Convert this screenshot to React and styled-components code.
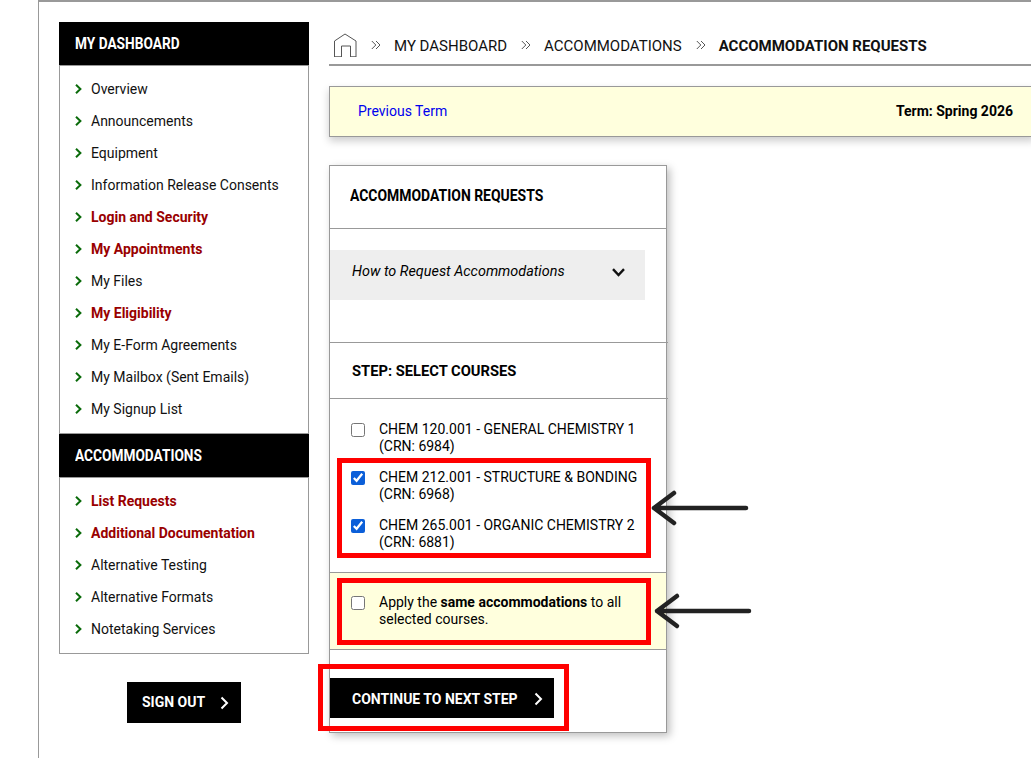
import React from "react";
import styled, { createGlobalStyle } from "styled-components";

const Global = createGlobalStyle`
  html, body { margin: 0; padding: 0; height: 758px; overflow: hidden; background: #fff; }
  body { font-family: Roboto, "Liberation Sans", sans-serif; font-size: 14px; color: #000; }
`;
const Page = styled.div`
  position: relative; display: flex; gap: 20px; height: 758px; box-sizing: border-box;
  margin-left: 38px; padding: 20px 0 0 20px;
  border-top: 2px solid #999; border-left: 1px solid #999; overflow: hidden;
`;
const Sidebar = styled.aside`flex: 0 0 250px; display: flex; flex-direction: column;`;
const Condensed = styled.span`
  display: inline-block; transform: scaleX(${p => p.$x || 0.805}); transform-origin: left center; white-space: nowrap;
`;
const SideHeader = styled.h2`
  margin: 0; height: 43px; box-sizing: border-box; background: #000; color: #fff; padding: 0 0 2px 16px;
  display: flex; align-items: center; font-size: 17px; font-weight: 700;
`;
const SideList = styled.ul`
  margin: 0; padding: 7px 0 8px 15px; list-style: none; border: 1px solid #999;
`;
const SideItem = styled.li`
  height: 32px; display: flex; align-items: center; gap: 9px;
  color: ${p => p.$alert ? "#990000" : "#111"}; font-weight: ${p => p.$alert ? 700 : 400};
`;
const Chevron = styled.svg`flex: none; width: 7px; height: 10px; fill: none; stroke: #0b6b0b; stroke-width: 2;`;
const SignOut = styled.button`
  align-self: center; margin-top: 28px; width: 114px; height: 41px; border: 0; background: #000; color: #fff;
  font: 700 14px Roboto, sans-serif; display: flex; align-items: center; padding: 0 0 0 15px; gap: 15px;
`;
const SignOutLabel = styled.span`margin-top: -2px;`;
const BtnChevron = styled.svg`flex: none; width: 9px; height: 14px; fill: none; stroke: #fff; stroke-width: 2;`;
const Main = styled.main`flex: 1; min-width: 0; display: flex; flex-direction: column; align-items: flex-start;`;
const Crumbs = styled.nav`
  align-self: stretch; height: 36px; padding: 6px 0 0 4px; border-bottom: 2px solid #999; box-sizing: content-box;
  display: flex; align-items: center; margin-bottom: 20px; font-size: 15px; color: #111;
`;
const HomeIcon = styled.svg`width: 24px; height: 24px; fill: none; stroke: #555; stroke-width: 1; margin-top: -2px;`;
const Sep = styled.svg`width: 10px; height: 10px; fill: none; stroke: #555; stroke-width: 1; margin: -2px 13px 0 14px;`;
const CrumbCurrent = styled.strong`font-weight: 700;`;
const TermBar = styled.div`
  align-self: stretch; margin-right: -4px; height: 51px; box-sizing: border-box; background: #ffd; border: 1px solid #999;
  box-shadow: 0 4px 8px rgba(0,0,0,.2); display: flex; align-items: center; justify-content: space-between;
  padding: 0 21px 2px 28px;
`;
const TermLink = styled.a`color: #0000ee;`;
const TermLabel = styled.strong`font-weight: 700;`;
const Card = styled.section`
  margin-top: 28px; width: 338px; height: 568px; box-sizing: border-box; border: 1px solid #999;
  box-shadow: 3px 3px 8px rgba(0,0,0,.25); display: flex; flex-direction: column;
`;
const CardTitle = styled.h1`
  margin: 0; flex: none; height: 63px; box-sizing: border-box; border-bottom: 1px solid #999; padding: 0 0 5px 20px;
  display: flex; align-items: center; font-size: 17px; font-weight: 700;
`;
const AccordionZone = styled.div`flex: none; height: 114px; box-sizing: border-box; padding-top: 21px; border-bottom: 1px solid #999; margin-right: -2px;`;
const Accordion = styled.div`
  width: 315px; height: 50px; background: #eee; display: flex; align-items: center; justify-content: space-between;
  box-sizing: border-box; padding: 0 20px 0 22px;
`;
const AccordionLabel = styled.span`font-style: italic; font-size: 14.4px; margin-top: -8px;`;
const Down = styled.svg`width: 13px; height: 9px; fill: none; stroke: #111; stroke-width: 2.4; margin-top: -6px;`;
const StepTitle = styled.h2`
  margin: 0; flex: none; height: 56px; box-sizing: border-box; border-bottom: 1px solid #999; margin-right: -2px; padding-left: 22px;
  display: flex; align-items: center; font-size: 15px; font-weight: 700;
`;
const Courses = styled.div`flex: none; height: 173px; box-sizing: border-box; padding-top: 22px; display: flex; flex-direction: column; gap: 14px;`;
const CheckRow = styled.label`display: flex; gap: 14px; padding-left: 21px; line-height: 17px;`;
const Box = styled.input`width: 14px; height: 14px; margin: 2px 0 0; flex: none; accent-color: #0b5fd9;`;
const Same = styled.div`
  flex: none; height: 78px; box-sizing: border-box; background: #ffd; border-top: 1px solid #999; border-bottom: 1px solid #999; padding-top: 21px;
`;
const Continue = styled.button`
  margin: 28px 0 0; width: 224px; height: 40px; border: 0; background: #000; color: #fff; flex: none;
  font: 700 14px Roboto, sans-serif; display: flex; align-items: center; padding: 1px 0 0 22px; gap: 16px;
`;
const Highlight = styled.div`
  position: absolute; left: ${p => p.$x}px; top: ${p => p.$y}px; width: ${p => p.$w}px; height: ${p => p.$h}px;
  box-sizing: border-box; border: 5px solid #f00; pointer-events: none;
`;
const Arrow = styled.svg`
  position: absolute; left: ${p => p.$x}px; top: ${p => p.$y}px; width: 100px; height: 40px;
  fill: none; stroke: #222; stroke-width: 4.5; stroke-linecap: round; stroke-linejoin: round;
`;

const Item = ({ alert, children }) => (
  <SideItem $alert={alert}>
    <Chevron viewBox="0 0 7 10"><path d="M1 .8 5.4 5 1 9.2" /></Chevron>
    <span>{children}</span>
  </SideItem>
);
const SepIcon = () => (
  <Sep viewBox="0 0 10 10"><path d="M.8 1l4 4-4 4M5 1l4 4-4 4" /></Sep>
);
const RightChevron = () => (
  <BtnChevron viewBox="0 0 9 14"><path d="M1.5 1.5 7 7l-5.5 5.5" /></BtnChevron>
);
const ArrowIcon = ({ x, y }) => (
  <Arrow $x={x} $y={y} viewBox="0 0 100 40"><path d="M96 20H4M24 5 4 20l20 15" /></Arrow>
);

export default function App() {
  return (
    <Page>
      <Global />
      <Sidebar>
        <SideHeader><Condensed>MY DASHBOARD</Condensed></SideHeader>
        <SideList>
          <Item>Overview</Item>
          <Item>Announcements</Item>
          <Item>Equipment</Item>
          <Item>Information Release Consents</Item>
          <Item alert>Login and Security</Item>
          <Item alert>My Appointments</Item>
          <Item>My Files</Item>
          <Item alert>My Eligibility</Item>
          <Item>My E-Form Agreements</Item>
          <Item>My Mailbox (Sent Emails)</Item>
          <Item>My Signup List</Item>
        </SideList>
        <SideHeader><Condensed>ACCOMMODATIONS</Condensed></SideHeader>
        <SideList>
          <Item alert>List Requests</Item>
          <Item alert>Additional Documentation</Item>
          <Item>Alternative Testing</Item>
          <Item>Alternative Formats</Item>
          <Item>Notetaking Services</Item>
        </SideList>
        <SignOut><SignOutLabel>SIGN OUT</SignOutLabel> <RightChevron /></SignOut>
      </Sidebar>
      <Main>
        <Crumbs>
          <HomeIcon viewBox="0 0 24 24"><path d="M1.5 24V8L12 1l11 7v16h-5.5V13h-9v11zM1.5 24h7M17.5 24H23" /></HomeIcon>
          <SepIcon />
          <span>MY DASHBOARD</span>
          <SepIcon />
          <span>ACCOMMODATIONS</span>
          <SepIcon />
          <CrumbCurrent>ACCOMMODATION REQUESTS</CrumbCurrent>
        </Crumbs>
        <TermBar>
          <TermLink>Previous Term</TermLink>
          <TermLabel>Term: Spring 2026</TermLabel>
        </TermBar>
        <Card>
          <CardTitle><Condensed $x={0.82}>ACCOMMODATION REQUESTS</Condensed></CardTitle>
          <AccordionZone>
            <Accordion>
              <AccordionLabel>How to Request Accommodations</AccordionLabel>
              <Down viewBox="0 0 13 9"><path d="M1 1.2 6.5 7 12 1.2" /></Down>
            </Accordion>
          </AccordionZone>
          <StepTitle><Condensed $x={0.98}>STEP: SELECT COURSES</Condensed></StepTitle>
          <Courses>
            <CheckRow><Box type="checkbox" /><span>CHEM 120.001 - GENERAL CHEMISTRY 1<br />(CRN: 6984)</span></CheckRow>
            <CheckRow><Box type="checkbox" defaultChecked /><span>CHEM 212.001 - STRUCTURE &amp; BONDING<br />(CRN: 6968)</span></CheckRow>
            <CheckRow><Box type="checkbox" defaultChecked /><span>CHEM 265.001 - ORGANIC CHEMISTRY 2<br />(CRN: 6881)</span></CheckRow>
          </Courses>
          <Same>
            <CheckRow><Box type="checkbox" /><span>Apply the <strong>same accommodations</strong> to all<br />selected courses.</span></CheckRow>
          </Same>
          <Continue>CONTINUE TO NEXT STEP <RightChevron /></Continue>
        </Card>
      </Main>
      <Highlight $x={298} $y={456} $w={314} $h={100} />
      <Highlight $x={298} $y={576} $w={314} $h={67} />
      <Highlight $x={279} $y={662} $w={251} $h={67} />
      <ArrowIcon x={611} y={486} />
      <ArrowIcon x={614} y={589} />
    </Page>
  );
}
